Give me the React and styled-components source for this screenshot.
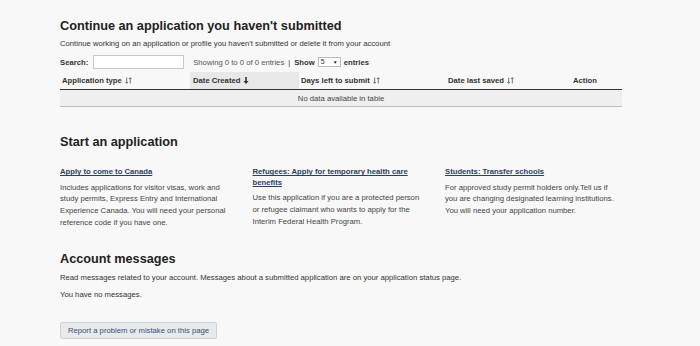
import React from "react";
import styled, { createGlobalStyle } from "styled-components";

const Global = createGlobalStyle`
  html, body { margin: 0; padding: 0; background: #f8f8f8; }
  body {
    font-family: "Liberation Sans", Arial, sans-serif;
    color: #333;
    font-size: 7.7px;
    line-height: 11.3px;
  }
  * { box-sizing: border-box; }
`;

const Page = styled.main`
  width: 562px;
  margin-left: 60px;
  padding-top: 19px;
  padding-bottom: 8px;
`;

const Heading = styled.h2`
  margin: ${(p) => p.$mt || 0}px 0 0;
  font-size: 12.7px;
  line-height: 15px;
  font-weight: 700;
  color: #222;
`;

const Para = styled.p`
  margin: ${(p) => p.$mt || 0}px 0 0;
  font-size: 7.7px;
  line-height: 11.3px;
  color: #333;
`;

const Controls = styled.div`
  margin-top: 6px;
  display: flex;
  align-items: center;
  height: 14px;
`;

const Label = styled.span`
  font-weight: 700;
  color: #333;
`;

const SearchInput = styled.div`
  margin-left: 5px;
  width: 91px;
  height: 14px;
  background: #fff;
  border: 1px solid #c8c8c8;
`;

const Info = styled.span`
  margin-left: 9px;
  color: #555;
  display: flex;
  align-items: center;
  gap: 3px;
`;

const Bar = styled.span`
  color: #333;
  margin: 0 1px;
`;

const SelectBox = styled.span`
  display: inline-flex;
  align-items: center;
  justify-content: space-between;
  width: 23px;
  height: 10px;
  padding: 0 2px 0 2px;
  background: #fff;
  border: 1px solid #bbb;
  font-size: 7px;
  line-height: 8px;
  color: #333;
`;

const Caret = styled.span`
  font-size: 5px;
`;

const Table = styled.div`
  margin-top: 3px;
  width: 562px;
`;

const HeadRow = styled.div`
  display: grid;
  grid-template-columns: 130px 109px 147px 124px 52px;
  border-bottom: 1px solid #333;
`;

const Th = styled.div`
  height: 17px;
  display: flex;
  align-items: center;
  gap: 3px;
  padding-left: ${(p) => p.$pl ?? 2}px;
  font-weight: 700;
  color: #333;
  background: ${(p) => (p.$active ? "#e8e8e8" : "transparent")};
`;

const EmptyRow = styled.div`
  height: 17px;
  display: flex;
  align-items: center;
  justify-content: center;
  background: #efefef;
  border-bottom: 1px solid #bdbdbd;
  color: #444;
`;

const Cards = styled.div`
  margin-top: 17px;
  display: grid;
  grid-template-columns: repeat(3, 172px);
  column-gap: 20.5px;
`;

const Card = styled.div``;

const CardLink = styled.a`
  display: block;
  font-weight: 700;
  color: #284162;
  text-decoration: underline;
  line-height: 10.7px;
  margin-bottom: 3.6px;
`;

const CardText = styled.p`
  margin: 0;
  color: #444;
  line-height: 11.8px;
`;

const Button = styled.button`
  margin-top: 22px;
  display: block;
  height: 17px;
  width: 157px;
  padding: 0;
  border: 1px solid #cfd1d5;
  border-radius: 2px;
  background: #e9eaec;
  color: #335075;
  font-family: "Liberation Sans", Arial, sans-serif;
  font-size: 7.7px;
  line-height: 15px;
`;

const SortBoth = () => (
  <svg width="7" height="7" viewBox="0 0 7 7" fill="none" stroke="#666" strokeWidth="0.9">
    <path d="M1.7 0.5V6.3M0.4 5L1.7 6.3L3 5" />
    <path d="M5.3 6.5V0.7M4 2L5.3 0.7L6.6 2" />
  </svg>
);

const SortDown = () => (
  <svg width="6" height="7" viewBox="0 0 6 7">
    <path d="M2.2 0H3.8V4H5.6L3 7L0.4 4H2.2Z" fill="#333" />
  </svg>
);

const cards = [
  {
    title: "Apply to come to Canada",
    text:
      "Includes applications for visitor visas, work and study permits, Express Entry and International Experience Canada. You will need your personal reference code if you have one.",
  },
  {
    title: "Refugees: Apply for temporary health care benefits",
    text:
      "Use this application if you are a protected person or refugee claimant who wants to apply for the Interim Federal Health Program.",
  },
  {
    title: "Students: Transfer schools",
    text:
      "For approved study permit holders only.Tell us if you are changing designated learning institutions. You will need your application number.",
  },
];

export default function App() {
  return (
    <>
      <Global />
      <Page>
        <Heading>Continue an application you haven't submitted</Heading>
        <Para $mt={4}>
          Continue working on an application or profile you haven't submitted or delete it from your account
        </Para>
        <Controls>
          <Label>Search:</Label>
          <SearchInput />
          <Info>
            Showing 0 to 0 of 0 entries <Bar>|</Bar>
            <Label>Show</Label>
            <SelectBox>
              5<Caret>▼</Caret>
            </SelectBox>
            <Label>entries</Label>
          </Info>
        </Controls>
        <Table>
          <HeadRow>
            <Th>
              Application type <SortBoth />
            </Th>
            <Th $active $pl={3}>
              Date Created <SortDown />
            </Th>
            <Th>
              Days left to submit <SortBoth />
            </Th>
            <Th>
              Date last saved <SortBoth />
            </Th>
            <Th $pl={3}>Action</Th>
          </HeadRow>
          <EmptyRow>No data available in table</EmptyRow>
        </Table>

        <Heading $mt={28}>Start an application</Heading>
        <Cards>
          {cards.map((c) => (
            <Card key={c.title}>
              <CardLink href="#">{c.title}</CardLink>
              <CardText>{c.text}</CardText>
            </Card>
          ))}
        </Cards>

        <Heading $mt={23}>Account messages</Heading>
        <Para $mt={5.5}>
          Read messages related to your account. Messages about a submitted application are on your application status page.
        </Para>
        <Para $mt={5}>You have no messages.</Para>
        <Button>Report a problem or mistake on this page</Button>
      </Page>
    </>
  );
}
